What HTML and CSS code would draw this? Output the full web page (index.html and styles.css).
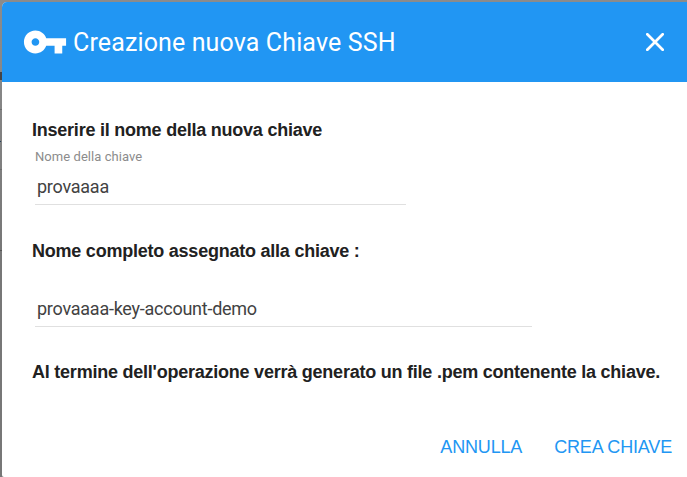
FILE: index.html
```html
<!DOCTYPE html>
<html lang="it">
<head>
<meta charset="utf-8">
<title>Creazione nuova Chiave SSH</title>
<link rel="stylesheet" href="styles.css">
</head>
<body>
<main class="dialog">
  <header class="toolbar">
    <svg class="key" viewBox="0 0 24 24"><path d="M12.65 10C11.83 7.67 9.61 6 7 6c-3.31 0-6 2.69-6 6s2.69 6 6 6c2.61 0 4.83-1.67 5.65-4H17v4h4v-4h2v-4H12.65zM7 14c-1.1 0-2-.9-2-2s.9-2 2-2 2 .9 2 2-.9 2-2 2z"/></svg>
    <h1 class="title">Creazione nuova Chiave SSH</h1>
    <svg class="close" viewBox="0 0 18 18"><path d="M1.3 1.3 16.7 16.7M16.7 1.3 1.3 16.7"/></svg>
  </header>
  <section class="content">
    <h2 class="heading">Inserire il nome della nuova chiave</h2>
    <div class="field short">
      <label class="label">Nome della chiave</label>
      <div class="value">provaaaa</div>
    </div>
    <h2 class="heading">Nome completo assegnato alla chiave :</h2>
    <div class="field long">
      <div class="value">provaaaa-key-account-demo</div>
    </div>
    <h2 class="heading">Al termine dell'operazione verrà generato un file .pem contenente la chiave.</h2>
  </section>
  <footer class="actions">
    <span class="action">ANNULLA</span>
    <span class="action">CREA CHIAVE</span>
  </footer>
</main>
</body>
</html>
```
FILE: styles.css
```css
* { box-sizing: border-box; }
body {
  margin: 0;
  height: 477px;
  padding: 2px 0 0 2px;
  overflow: hidden;
  background:
    linear-gradient(#444, #444) 0 72px / 2px 8px no-repeat,
    linear-gradient(#6c6c6c, #6c6c6c) 0 109px / 2px 1px no-repeat,
    linear-gradient(#24415c, #24415c) 0 141px / 1px 1px no-repeat,
    linear-gradient(#6c6c6c, #6c6c6c) 0 169px / 2px 1px no-repeat,
    linear-gradient(#555, #555) 0 250px / 2px 1px no-repeat,
    linear-gradient(#8b8b8b 0, #878787 80px, #777 250px, #777 477px);
  font-family: Roboto, sans-serif;
}
.dialog {
  height: 475px;
  background: #fff;
  border-radius: 5px 0 0 2px;
  overflow: hidden;
}
.toolbar {
  display: flex;
  align-items: center;
  height: 80px;
  padding: 0 23px 0 20px;
  background: #2196f3;
  color: #fff;
}
.key { width: 46px; height: 46px; margin-bottom: 1px; fill: currentColor; }
.title {
  margin: 0 auto 0 5px;
  padding-top: 2px;
  font-size: 25px;
  line-height: 32px;
  font-weight: 400;
  letter-spacing: .13px;
  white-space: nowrap;
}
.close { width: 18px; height: 18px; fill: none; stroke: currentColor; stroke-width: 2.7; stroke-linecap: round; }
.content { padding: 36px 0 0 30px; }
.heading {
  margin: 0;
  height: 24px;
  font: 700 18px/24px "Liberation Sans", Arial, sans-serif;
  letter-spacing: -.23px;
  color: #212121;
  white-space: nowrap;
}
.field { margin-left: 3px; border-bottom: 1px solid #e0e0e0; }
.short { width: 371px; height: 63px; margin-bottom: 34px; }
.long { width: 497px; height: 64px; margin-bottom: 33px; padding-top: 32px; }
.label { display: block; height: 31px; padding-top: 5px; font-size: 13px; line-height: 20px; letter-spacing: .06px; color: #8c8c8c; }
.value { padding: 2px 0 0 2px; font-size: 18px; line-height: 24px; letter-spacing: -.25px; color: #424242; }
.actions {
  display: flex;
  justify-content: flex-end;
  gap: 32px;
  padding: 51px 15px 0 0;
  font: 400 18px/24px "Liberation Sans", Arial, sans-serif;
  letter-spacing: -.17px;
  color: #2196f3;
}
```
